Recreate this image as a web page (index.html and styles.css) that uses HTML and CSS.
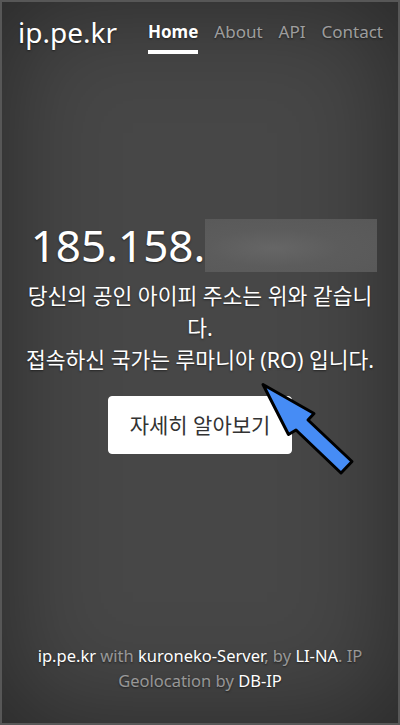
FILE: index.html
```html
<!DOCTYPE html>
<html lang="ko">
<head>
  <meta charset="UTF-8">
  <title>ip.pe.kr</title>
  <link rel="stylesheet" href="styles.css">
</head>
<body>
  <div class="cover">
    <header class="masthead">
      <h3 class="brand">ip.pe.kr</h3>
      <nav class="nav">
        <a class="nav-link active" href="#">Home</a>
        <a class="nav-link" href="#">About</a>
        <a class="nav-link" href="#">API</a>
        <a class="nav-link" href="#">Contact</a>
      </nav>
    </header>

    <main class="inner">
      <h1 class="ip">185.158.<span class="mask"></span></h1>
      <p class="lead">당신의 공인 아이피 주소는 위와 같습니다.<br>접속하신 국가는 루마니아 (RO) 입니다.</p>
      <a class="btn" href="#">자세히 알아보기</a>
    </main>

    <footer class="mastfoot">
      <p><a href="#">ip.pe.kr</a> with <a href="#">kuroneko-Server</a>, by <a href="#">LI-NA</a>. IP Geolocation by <a href="#">DB-IP</a></p>
    </footer>

    <!-- pointer drawn over the page -->
    <svg class="pointer" viewBox="0 0 400 725" width="400" height="725">
      <polygon points="263,384.5 314,413.5 308,420 352,461.5 341,473 296,430 288.5,434.5"
               fill="#468cf5" stroke="#000" stroke-width="3" stroke-linejoin="round"/>
    </svg>
  </div>
</body>
</html>
```

FILE: styles.css
```css
html, body {
  margin: 0;
  height: 100%;
}
body {
  font-family: "Noto Sans", "Noto Sans CJK KR", sans-serif;
  color: #fff;
  background-color: #333;
}
.cover {
  position: relative;
  box-sizing: border-box;
  height: 725px;
  display: flex;
  flex-direction: column;
  border: 2px solid #575757;
  background-color: #474747;
  box-shadow: inset 0 0 110px rgba(0,0,0,.45);
  text-shadow: 0 1px 2px rgba(0,0,0,.5);
}
a {
  color: #fff;
  text-decoration: none;
}

/* header */
.masthead {
  display: flex;
  justify-content: space-between;
  align-items: flex-start;
  padding: 13px 15px 0 16px;
}
.brand {
  margin: 0;
  font-size: 28px;
  font-weight: normal;
  line-height: 34px;
}
.nav {
  display: flex;
  gap: 16px;
  margin-top: 5px;
}
.nav-link {
  font-size: 17px;
  line-height: 24px;
  padding-bottom: 6px;
  border-bottom: 4px solid transparent;
  color: rgba(255,255,255,.55);
}
.nav-link.active {
  color: #fff;
  font-weight: bold;
  border-bottom-color: #fff;
}

/* main */
.inner {
  margin-top: 165px;
  padding: 0 20px;
  text-align: center;
}
.ip {
  margin: 0;
  padding-left: 8px;
  font-size: 44px;
  font-weight: normal;
  line-height: 53px;
  white-space: nowrap;
}
.mask {
  display: inline-block;
  width: 172px;
  height: 53px;
  vertical-align: top;
  background: radial-gradient(ellipse at 40% 55%, #666 0%, #5c5c5c 45%, #585858 100%);
}
.lead {
  margin: 8px 0 0;
  font-size: 21.5px;
  line-height: 32px;
}
.btn {
  display: inline-block;
  margin-top: 20px;
  padding: 13px 21px;
  font-size: 21px;
  line-height: 30px;
  color: #333;
  background-color: #fff;
  border: 1px solid #fff;
  border-radius: 4px;
  text-shadow: none;
}

/* footer */
.mastfoot {
  margin-top: auto;
  padding: 0 30px 30px;
  text-align: center;
  font-size: 16.5px;
  line-height: 25px;
  color: rgba(255,255,255,.5);
}
.mastfoot p {
  margin: 0;
}

.pointer {
  position: absolute;
  left: -2px;
  top: -2px;
  pointer-events: none;
}
```
